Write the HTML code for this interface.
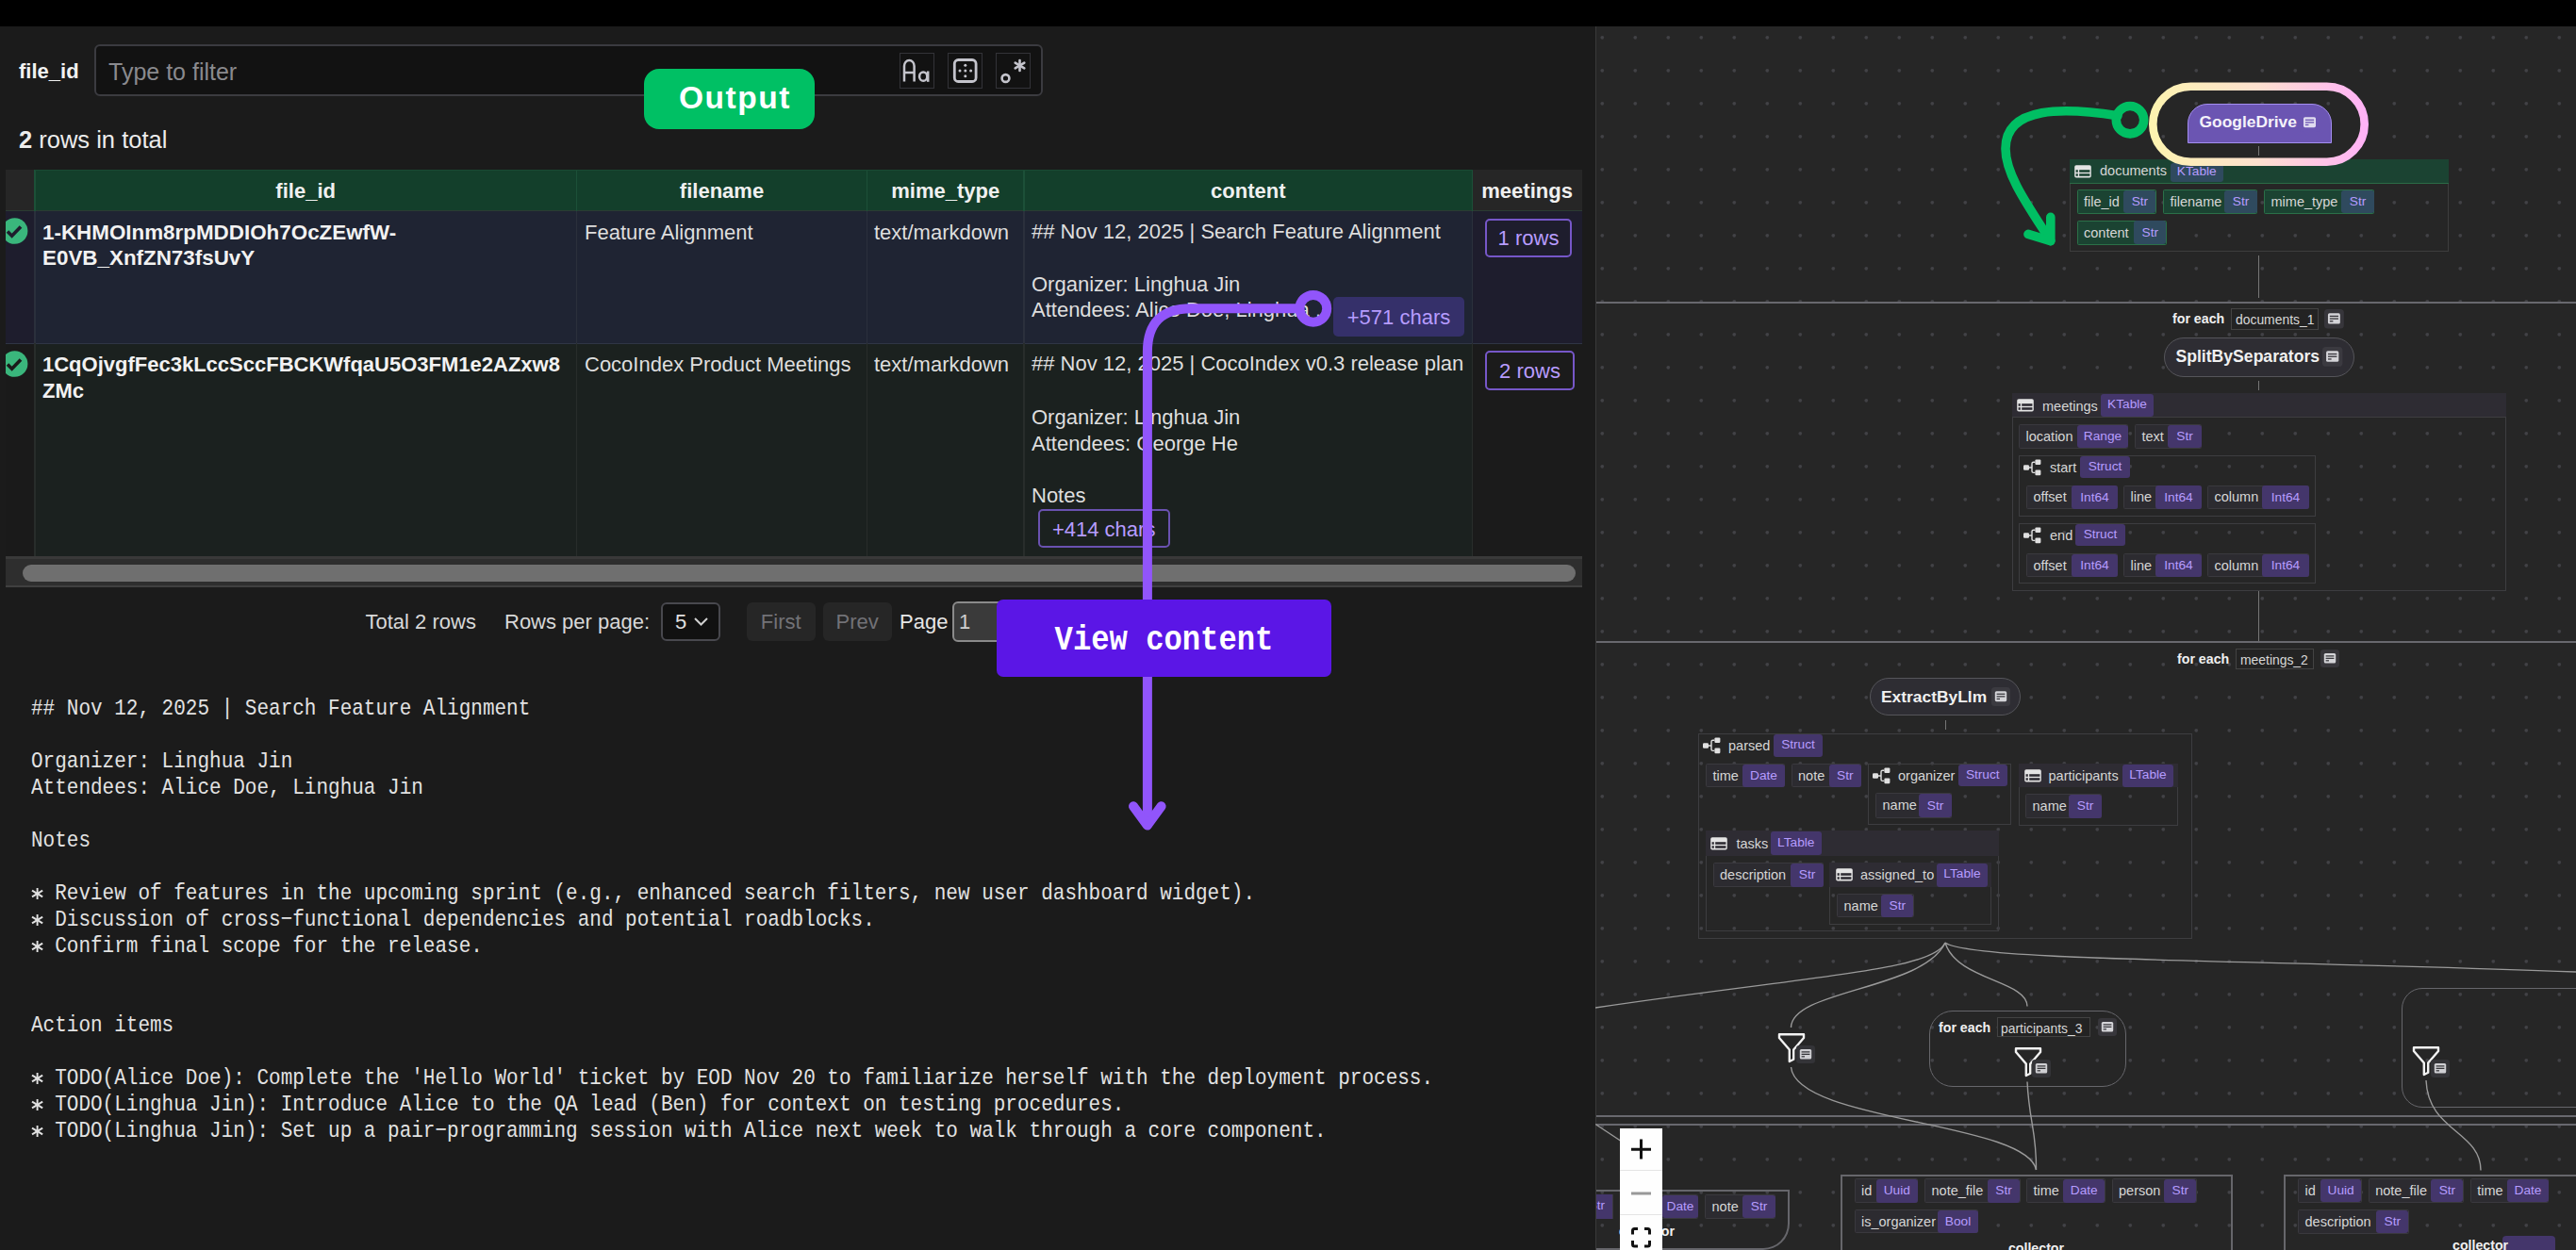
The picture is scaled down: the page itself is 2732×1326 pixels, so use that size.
<!DOCTYPE html><html><head><meta charset="utf-8"><style>
html,body{margin:0;padding:0}
body{width:2732px;height:1326px;overflow:hidden;position:relative;background:#1b1b1b;font-family:"Liberation Sans",sans-serif}
.a{position:absolute;box-sizing:border-box}
.t{white-space:pre}
</style></head><body>
<div class="a" style="left:0.00px;top:0.00px;width:2732.00px;height:28.00px;background:#000;"></div>
<div class="a t" style="left:20.00px;top:65.27px;font-size:22px;line-height:22px;color:#f2f2f2;font-family:'Liberation Sans', sans-serif;font-weight:bold;">file_id</div>
<div class="a" style="left:100.00px;top:47.00px;width:1006.00px;height:55.00px;background:#121212;border:2px solid #3b3b40;border-radius:6px;"></div>
<div class="a t" style="left:115.00px;top:63.73px;font-size:25px;line-height:25px;color:#8a8a8e;font-family:'Liberation Sans', sans-serif;">Type to filter</div>
<div class="a" style="left:954.00px;top:56.00px;width:37.00px;height:38.00px;border:1px solid #333338;"></div>
<div class="a" style="left:1005.00px;top:56.00px;width:37.00px;height:38.00px;border:1px solid #333338;"></div>
<div class="a" style="left:1055.60px;top:56.00px;width:37.00px;height:38.00px;border:1px solid #333338;"></div>
<svg class="a" style="left:954px;top:56px" width="37" height="38" viewBox="0 0 37 38">
<path d="M5 30.5 V14 A5.3 6 0 0 1 15.6 14 V30.5 M5 21 H15.6" fill="none" stroke="#c4c4cc" stroke-width="2.5"/>
<ellipse cx="25.2" cy="25.2" rx="4.1" ry="4.6" fill="none" stroke="#c4c4cc" stroke-width="2.5"/>
<path d="M30.2 19.5 V30.8" stroke="#c4c4cc" stroke-width="2.5"/>
</svg>
<svg class="a" style="left:1005px;top:56px" width="37" height="38" viewBox="0 0 37 38">
<rect x="7.3" y="7.5" width="22.8" height="23" rx="4" fill="none" stroke="#c4c4cc" stroke-width="2.8"/>
<circle cx="18.8" cy="19" r="1.5" fill="#c4c4cc"/><circle cx="18.8" cy="13.2" r="1.5" fill="#c4c4cc"/>
<circle cx="18.8" cy="24.8" r="1.5" fill="#c4c4cc"/><circle cx="13" cy="19" r="1.5" fill="#c4c4cc"/><circle cx="24.6" cy="19" r="1.5" fill="#c4c4cc"/>
</svg>
<svg class="a" style="left:1055.6px;top:56px" width="37" height="38" viewBox="0 0 37 38">
<circle cx="10.5" cy="27" r="3.9" fill="none" stroke="#c4c4cc" stroke-width="2.6"/>
<g stroke="#c4c4cc" stroke-width="2.6" stroke-linecap="round"><path d="M25.5 8 V19"/><path d="M20.7 10.7 L30.3 16.3"/><path d="M30.3 10.7 L20.7 16.3"/></g>
</svg>
<div class="a t" style="left:20.00px;top:136.31px;font-size:25.5px;line-height:25.5px;color:#ececec;font-family:'Liberation Sans', sans-serif;"><b>2</b> rows in total</div>
<div class="a" style="left:5.60px;top:180.00px;width:31.20px;height:43.60px;background:#262626;"></div>
<div class="a" style="left:36.80px;top:180.00px;width:1524.80px;height:43.60px;background:#133f2b;"></div>
<div class="a" style="left:1561.60px;top:180.00px;width:116.00px;height:43.60px;background:#262626;"></div>
<div class="a" style="left:5.60px;top:223.60px;width:31.20px;height:140.70px;background:#1e1d2d;"></div>
<div class="a" style="left:36.80px;top:223.60px;width:1524.80px;height:140.70px;background:#1f2433;"></div>
<div class="a" style="left:1561.60px;top:223.60px;width:116.00px;height:140.70px;background:#1e1d2d;"></div>
<div class="a" style="left:5.60px;top:364.30px;width:31.20px;height:225.30px;background:#1a1a1a;"></div>
<div class="a" style="left:36.80px;top:364.30px;width:1524.80px;height:225.30px;background:#1b211f;"></div>
<div class="a" style="left:1561.60px;top:364.30px;width:116.00px;height:225.30px;background:#1b1b1b;"></div>
<div class="a" style="left:5.60px;top:223.10px;width:1672.00px;height:1.00px;background:#2b3b33;"></div>
<div class="a" style="left:5.60px;top:363.80px;width:1672.00px;height:1.00px;background:#2f3545;"></div>
<div class="a" style="left:36.05px;top:180.00px;width:1.50px;height:43.60px;background:#1c5038;"></div>
<div class="a" style="left:36.05px;top:223.60px;width:1.50px;height:140.70px;background:#2b303c;"></div>
<div class="a" style="left:36.05px;top:364.30px;width:1.50px;height:225.30px;background:#282d2b;"></div>
<div class="a" style="left:610.75px;top:180.00px;width:1.50px;height:43.60px;background:#1c5038;"></div>
<div class="a" style="left:610.75px;top:223.60px;width:1.50px;height:140.70px;background:#2b303c;"></div>
<div class="a" style="left:610.75px;top:364.30px;width:1.50px;height:225.30px;background:#282d2b;"></div>
<div class="a" style="left:918.75px;top:180.00px;width:1.50px;height:43.60px;background:#1c5038;"></div>
<div class="a" style="left:918.75px;top:223.60px;width:1.50px;height:140.70px;background:#2b303c;"></div>
<div class="a" style="left:918.75px;top:364.30px;width:1.50px;height:225.30px;background:#282d2b;"></div>
<div class="a" style="left:1085.25px;top:180.00px;width:1.50px;height:43.60px;background:#1c5038;"></div>
<div class="a" style="left:1085.25px;top:223.60px;width:1.50px;height:140.70px;background:#2b303c;"></div>
<div class="a" style="left:1085.25px;top:364.30px;width:1.50px;height:225.30px;background:#282d2b;"></div>
<div class="a" style="left:1560.85px;top:180.00px;width:1.50px;height:43.60px;background:#1c5038;"></div>
<div class="a" style="left:1560.85px;top:223.60px;width:1.50px;height:140.70px;background:#2b303c;"></div>
<div class="a" style="left:1560.85px;top:364.30px;width:1.50px;height:225.30px;background:#282d2b;"></div>
<div class="a" style="left:36.80px;top:180.00px;width:1524.80px;height:1.00px;background:#1a4a33;"></div>
<div class="a" style="left:5.60px;top:589.60px;width:1672.00px;height:33.70px;background:#2e2e2e;"></div>
<div class="a" style="left:5.60px;top:589.60px;width:1672.00px;height:3.00px;background:#393939;"></div>
<div class="a" style="left:5.60px;top:621.00px;width:1672.00px;height:2.30px;background:#404040;"></div>
<div class="a" style="left:24.00px;top:599.00px;width:1647.00px;height:18.10px;background:#6f6f6f;border-radius:9px;"></div>
<div class="a t" style="left:-675.85px;width:2000px;text-align:center;top:191.77px;font-size:22px;line-height:22px;color:#f0f0f0;font-family:'Liberation Sans', sans-serif;font-weight:bold;">file_id</div>
<div class="a t" style="left:-234.50px;width:2000px;text-align:center;top:191.77px;font-size:22px;line-height:22px;color:#f0f0f0;font-family:'Liberation Sans', sans-serif;font-weight:bold;">filename</div>
<div class="a t" style="left:2.75px;width:2000px;text-align:center;top:191.77px;font-size:22px;line-height:22px;color:#f0f0f0;font-family:'Liberation Sans', sans-serif;font-weight:bold;">mime_type</div>
<div class="a t" style="left:323.80px;width:2000px;text-align:center;top:191.77px;font-size:22px;line-height:22px;color:#f0f0f0;font-family:'Liberation Sans', sans-serif;font-weight:bold;">content</div>
<div class="a t" style="left:619.60px;width:2000px;text-align:center;top:191.77px;font-size:22px;line-height:22px;color:#f0f0f0;font-family:'Liberation Sans', sans-serif;font-weight:bold;">meetings</div>
<svg class="a" style="left:5.6px;top:231.40px" width="25" height="28" viewBox="5.6 231.40 25 28">
<circle cx="15.2" cy="245.4" r="13.8" fill="#3ab67c"/>
<path d="M7.6 246.0 L12.2 250.6 L21.6 240.8" fill="none" stroke="#1e1d2d" stroke-width="3.6"/></svg>
<svg class="a" style="left:5.6px;top:371.60px" width="25" height="28" viewBox="5.6 371.60 25 28">
<circle cx="15.2" cy="385.6" r="13.8" fill="#3ab67c"/>
<path d="M7.6 386.20000000000005 L12.2 390.8 L21.6 381.0" fill="none" stroke="#1a1a1a" stroke-width="3.6"/></svg>
<div class="a t" style="left:45.00px;top:235.93px;font-size:22.4px;line-height:22.4px;color:#f2f2f2;font-family:'Liberation Sans', sans-serif;font-weight:bold;">1-KHMOInm8rpMDDIOh7OcZEwfW-</div>
<div class="a t" style="left:45.00px;top:262.93px;font-size:22.4px;line-height:22.4px;color:#f2f2f2;font-family:'Liberation Sans', sans-serif;font-weight:bold;">E0VB_XnfZN73fsUvY</div>
<div class="a t" style="left:620.00px;top:236.27px;font-size:22px;line-height:22px;color:#dedede;font-family:'Liberation Sans', sans-serif;">Feature Alignment</div>
<div class="a t" style="left:927.00px;top:236.27px;font-size:22px;line-height:22px;color:#dedede;font-family:'Liberation Sans', sans-serif;">text/markdown</div>
<div class="a t" style="left:1094.00px;top:235.27px;font-size:22px;line-height:22px;color:#dedede;font-family:'Liberation Sans', sans-serif;">## Nov 12, 2025 | Search Feature Alignment</div>
<div class="a t" style="left:1094.00px;top:291.27px;font-size:22px;line-height:22px;color:#dedede;font-family:'Liberation Sans', sans-serif;">Organizer: Linghua Jin</div>
<div class="a t" style="left:1094.00px;top:317.77px;font-size:22px;line-height:22px;color:#dedede;font-family:'Liberation Sans', sans-serif;">Attendees: Alice Doe, Linghua ..</div>
<div class="a" style="left:1414.00px;top:314.50px;width:139.00px;height:42.50px;background:#35306a;border-radius:5px;"></div>
<div class="a t" style="left:483.50px;width:2000px;text-align:center;top:326.07px;font-size:22px;line-height:22px;color:#b69cff;font-family:'Liberation Sans', sans-serif;">+571 chars</div>
<div class="a" style="left:1575.00px;top:232.00px;width:92.00px;height:40.50px;border:2px solid #7657c8;border-radius:5px;"></div>
<div class="a t" style="left:621.00px;width:2000px;text-align:center;top:241.77px;font-size:22px;line-height:22px;color:#b89cff;font-family:'Liberation Sans', sans-serif;">1 rows</div>
<div class="a t" style="left:45.00px;top:376.27px;font-size:22px;line-height:22px;color:#f2f2f2;font-family:'Liberation Sans', sans-serif;font-weight:bold;">1CqOjvgfFec3kLccSccFBCKWfqaU5O3FM1e2AZxw8</div>
<div class="a t" style="left:45.00px;top:404.27px;font-size:22px;line-height:22px;color:#f2f2f2;font-family:'Liberation Sans', sans-serif;font-weight:bold;">ZMc</div>
<div class="a t" style="left:620.00px;top:376.27px;font-size:22px;line-height:22px;color:#dedede;font-family:'Liberation Sans', sans-serif;">CocoIndex Product Meetings</div>
<div class="a t" style="left:927.00px;top:376.27px;font-size:22px;line-height:22px;color:#dedede;font-family:'Liberation Sans', sans-serif;">text/markdown</div>
<div class="a t" style="left:1094.00px;top:375.27px;font-size:22px;line-height:22px;color:#dedede;font-family:'Liberation Sans', sans-serif;">## Nov 12, 2025 | CocoIndex v0.3 release plan</div>
<div class="a t" style="left:1094.00px;top:432.27px;font-size:22px;line-height:22px;color:#dedede;font-family:'Liberation Sans', sans-serif;">Organizer: Linghua Jin</div>
<div class="a t" style="left:1094.00px;top:459.77px;font-size:22px;line-height:22px;color:#dedede;font-family:'Liberation Sans', sans-serif;">Attendees: George He</div>
<div class="a t" style="left:1094.00px;top:515.27px;font-size:22px;line-height:22px;color:#dedede;font-family:'Liberation Sans', sans-serif;">Notes</div>
<div class="a" style="left:1100.50px;top:540.00px;width:140.50px;height:41.00px;border:2px solid #6a52b0;border-radius:5px;"></div>
<div class="a t" style="left:170.70px;width:2000px;text-align:center;top:550.77px;font-size:22px;line-height:22px;color:#b69cff;font-family:'Liberation Sans', sans-serif;">+414 chars</div>
<div class="a" style="left:1575.00px;top:371.60px;width:95.00px;height:42.60px;border:2px solid #7657c8;border-radius:5px;"></div>
<div class="a t" style="left:622.50px;width:2000px;text-align:center;top:383.47px;font-size:22px;line-height:22px;color:#b89cff;font-family:'Liberation Sans', sans-serif;">2 rows</div>
<div class="a t" style="left:387.50px;top:649.27px;font-size:22px;line-height:22px;color:#d8d8d8;font-family:'Liberation Sans', sans-serif;">Total 2 rows</div>
<div class="a t" style="left:535.00px;top:649.27px;font-size:22px;line-height:22px;color:#d8d8d8;font-family:'Liberation Sans', sans-serif;">Rows per page:</div>
<div class="a" style="left:700.50px;top:639.00px;width:63.50px;height:41.00px;background:#111111;border:2px solid #48484e;border-radius:6px;"></div>
<div class="a t" style="left:716.00px;top:649.27px;font-size:22px;line-height:22px;color:#e0e0e0;font-family:'Liberation Sans', sans-serif;">5</div>
<svg class="a" style="left:735px;top:653px" width="18" height="12" viewBox="0 0 18 12"><path d="M2 3 L8.5 9.5 L15 3" fill="none" stroke="#d0d0d0" stroke-width="2"/></svg>
<div class="a" style="left:792.00px;top:639.00px;width:72.50px;height:41.00px;background:#262626;border-radius:6px;"></div>
<div class="a t" style="left:-171.80px;width:2000px;text-align:center;top:649.27px;font-size:22px;line-height:22px;color:#727277;font-family:'Liberation Sans', sans-serif;">First</div>
<div class="a" style="left:873.00px;top:639.00px;width:72.50px;height:41.00px;background:#262626;border-radius:6px;"></div>
<div class="a t" style="left:-90.80px;width:2000px;text-align:center;top:649.27px;font-size:22px;line-height:22px;color:#727277;font-family:'Liberation Sans', sans-serif;">Prev</div>
<div class="a t" style="left:954.00px;top:649.27px;font-size:22px;line-height:22px;color:#e6e6e6;font-family:'Liberation Sans', sans-serif;">Page</div>
<div class="a" style="left:1009.50px;top:638.00px;width:70.50px;height:43.00px;background:#3a3a3a;border:2px solid #8a8a8a;border-radius:6px;"></div>
<div class="a t" style="left:1017.00px;top:649.27px;font-size:22px;line-height:22px;color:#cfcfcf;font-family:'Liberation Sans', sans-serif;">1</div>
<div class="a t" style="left:33.00px;top:741.51px;font-size:21px;line-height:21px;color:#e2e2e2;font-family:'Liberation Mono', monospace;transform:scaleY(1.16);transform-origin:0 16.1px;">## Nov 12, 2025 | Search Feature Alignment</div>
<div class="a t" style="left:33.00px;top:797.57px;font-size:21px;line-height:21px;color:#e2e2e2;font-family:'Liberation Mono', monospace;transform:scaleY(1.16);transform-origin:0 16.1px;">Organizer: Linghua Jin</div>
<div class="a t" style="left:33.00px;top:825.60px;font-size:21px;line-height:21px;color:#e2e2e2;font-family:'Liberation Mono', monospace;transform:scaleY(1.16);transform-origin:0 16.1px;">Attendees: Alice Doe, Linghua Jin</div>
<div class="a t" style="left:33.00px;top:881.66px;font-size:21px;line-height:21px;color:#e2e2e2;font-family:'Liberation Mono', monospace;transform:scaleY(1.16);transform-origin:0 16.1px;">Notes</div>
<svg class="a" style="left:32px;top:940.01px" width="16" height="16" viewBox="-8 -8 16 16"><g stroke="#e2e2e2" stroke-width="1.9"><path d="M-0.4 -6 V6"/><path d="M-6 -3.4 L5.2 3.4"/><path d="M-6 3.4 L5.2 -3.4"/></g></svg>
<div class="a t" style="left:33.00px;top:937.72px;font-size:21px;line-height:21px;color:#e2e2e2;font-family:'Liberation Mono', monospace;transform:scaleY(1.16);transform-origin:0 16.1px;">  Review of features in the upcoming sprint (e.g., enhanced search filters, new user dashboard widget).</div>
<svg class="a" style="left:32px;top:968.04px" width="16" height="16" viewBox="-8 -8 16 16"><g stroke="#e2e2e2" stroke-width="1.9"><path d="M-0.4 -6 V6"/><path d="M-6 -3.4 L5.2 3.4"/><path d="M-6 3.4 L5.2 -3.4"/></g></svg>
<div class="a t" style="left:33.00px;top:965.75px;font-size:21px;line-height:21px;color:#e2e2e2;font-family:'Liberation Mono', monospace;transform:scaleY(1.16);transform-origin:0 16.1px;">  Discussion of cross−functional dependencies and potential roadblocks.</div>
<svg class="a" style="left:32px;top:996.07px" width="16" height="16" viewBox="-8 -8 16 16"><g stroke="#e2e2e2" stroke-width="1.9"><path d="M-0.4 -6 V6"/><path d="M-6 -3.4 L5.2 3.4"/><path d="M-6 3.4 L5.2 -3.4"/></g></svg>
<div class="a t" style="left:33.00px;top:993.78px;font-size:21px;line-height:21px;color:#e2e2e2;font-family:'Liberation Mono', monospace;transform:scaleY(1.16);transform-origin:0 16.1px;">  Confirm final scope for the release.</div>
<div class="a t" style="left:33.00px;top:1077.87px;font-size:21px;line-height:21px;color:#e2e2e2;font-family:'Liberation Mono', monospace;transform:scaleY(1.16);transform-origin:0 16.1px;">Action items</div>
<svg class="a" style="left:32px;top:1136.22px" width="16" height="16" viewBox="-8 -8 16 16"><g stroke="#e2e2e2" stroke-width="1.9"><path d="M-0.4 -6 V6"/><path d="M-6 -3.4 L5.2 3.4"/><path d="M-6 3.4 L5.2 -3.4"/></g></svg>
<div class="a t" style="left:33.00px;top:1133.93px;font-size:21px;line-height:21px;color:#e2e2e2;font-family:'Liberation Mono', monospace;transform:scaleY(1.16);transform-origin:0 16.1px;">  TODO(Alice Doe): Complete the &#39;Hello World&#39; ticket by EOD Nov 20 to familiarize herself with the deployment process.</div>
<svg class="a" style="left:32px;top:1164.25px" width="16" height="16" viewBox="-8 -8 16 16"><g stroke="#e2e2e2" stroke-width="1.9"><path d="M-0.4 -6 V6"/><path d="M-6 -3.4 L5.2 3.4"/><path d="M-6 3.4 L5.2 -3.4"/></g></svg>
<div class="a t" style="left:33.00px;top:1161.96px;font-size:21px;line-height:21px;color:#e2e2e2;font-family:'Liberation Mono', monospace;transform:scaleY(1.16);transform-origin:0 16.1px;">  TODO(Linghua Jin): Introduce Alice to the QA lead (Ben) for context on testing procedures.</div>
<svg class="a" style="left:32px;top:1192.28px" width="16" height="16" viewBox="-8 -8 16 16"><g stroke="#e2e2e2" stroke-width="1.9"><path d="M-0.4 -6 V6"/><path d="M-6 -3.4 L5.2 3.4"/><path d="M-6 3.4 L5.2 -3.4"/></g></svg>
<div class="a t" style="left:33.00px;top:1189.99px;font-size:21px;line-height:21px;color:#e2e2e2;font-family:'Liberation Mono', monospace;transform:scaleY(1.16);transform-origin:0 16.1px;">  TODO(Linghua Jin): Set up a pair−programming session with Alice next week to walk through a core component.</div>
<div class="a" style="left:1692px;top:28px;width:1040px;height:1298px;background-color:#262626;background-image:radial-gradient(circle at 7.3px 11.8px,#424246 1.1px,#37373a 1.7px,transparent 2.3px);background-size:35px 35px;background-position:0 0"></div>
<div class="a" style="left:1692.00px;top:28.00px;width:1.00px;height:1298.00px;background:#3a3a3a;"></div>
<div class="a" style="left:1693.00px;top:320.00px;width:1039.00px;height:2.00px;background:#68686e;"></div>
<div class="a" style="left:1693.00px;top:680.00px;width:1039.00px;height:2.00px;background:#68686e;"></div>
<div class="a" style="left:1693.00px;top:1182.80px;width:1039.00px;height:2.00px;background:#68686e;"></div>
<div class="a" style="left:1693.00px;top:1191.50px;width:1039.00px;height:2.00px;background:#68686e;"></div>
<div class="a" style="left:2395.00px;top:154.50px;width:1.00px;height:10.50px;background:#767676;"></div>
<div class="a" style="left:2395.00px;top:271.00px;width:1.00px;height:45.00px;background:#767676;"></div>
<div class="a" style="left:2320px;top:109.5px;width:152.5px;height:42px;background:#6b55b2;border-radius:21px 21px 0 0;border:1.5px solid #a48ef0"></div>
<div class="a t" style="left:2332.50px;top:121.27px;font-size:17.4px;line-height:17.4px;color:#f4f2fa;font-family:'Liberation Sans', sans-serif;font-weight:bold;">GoogleDrive</div>
<svg class="a" style="left:2439.00px;top:120.00px" width="21.00" height="20.00" viewBox="0 0 20 20" preserveAspectRatio="none"><rect x="0" y="0" width="20" height="20" rx="3.5" fill="#6b55b2"/><rect x="3.8" y="4.2" width="12.4" height="11" rx="1.6" fill="#e0dcf0"/><rect x="5.6" y="6.6" width="8.8" height="1.3" fill="#6b55b2"/><rect x="5.6" y="9.2" width="8.8" height="1.3" fill="#6b55b2"/><rect x="5.6" y="11.8" width="3.4" height="1.3" fill="#6b55b2"/></svg>
<div class="a" style="left:2195.25px;top:169.00px;width:401.75px;height:98.10px;border:1px solid #3d3d3d;"></div>
<div class="a" style="left:2195.25px;top:169.00px;width:401.75px;height:25.40px;background:#1b4332;"></div>
<div class="a" style="left:2195.25px;top:193.90px;width:401.75px;height:1.00px;background:#2b6a46;"></div>
<svg class="a" style="left:2200.40px;top:175.00px" width="18" height="14" viewBox="0 0 18 14"><rect x="0.2" y="0.2" width="17.6" height="13.4" rx="1.8" fill="#e4e4e4"/><rect x="1.6" y="5.2" width="2.2" height="2.6" fill="#1b4332"/><rect x="5.2" y="5.2" width="11.2" height="2.6" fill="#1b4332"/><rect x="1.6" y="9.2" width="2.2" height="2.6" fill="#1b4332"/><rect x="5.2" y="9.2" width="11.2" height="2.6" fill="#1b4332"/></svg>
<div class="a t" style="left:2227.00px;top:173.92px;font-size:14.5px;line-height:14.5px;color:#d6d6d6;font-family:'Liberation Sans', sans-serif;">documents</div>
<div class="a" style="left:2302.00px;top:172.50px;width:55.50px;height:20.00px;background:#2f4a5e;border-radius:3px;"></div>
<div class="a t" style="left:1329.75px;width:2000px;text-align:center;top:174.90px;font-size:13.7px;line-height:13.7px;color:#b69cff;font-family:'Liberation Sans', sans-serif;">KTable</div>
<div class="a" style="left:2202.50px;top:201.20px;width:84.50px;height:25.60px;background:#1b4332;border:1px solid #2b7048;border-radius:1.5px;"></div>
<div class="a" style="left:2251.80px;top:201.70px;width:34.70px;height:24.60px;background:#2f4a5e;border-radius:3px;"></div>
<div class="a t" style="left:2210.00px;top:207.02px;font-size:14.5px;line-height:14.5px;color:#d6d6d6;font-family:'Liberation Sans', sans-serif;">file_id</div>
<div class="a t" style="left:1269.40px;width:2000px;text-align:center;top:207.30px;font-size:13.7px;line-height:13.7px;color:#b69cff;font-family:'Liberation Sans', sans-serif;">Str</div>
<div class="a" style="left:2294.00px;top:201.20px;width:100.00px;height:25.60px;background:#1b4332;border:1px solid #2b7048;border-radius:1.5px;"></div>
<div class="a" style="left:2359.00px;top:201.70px;width:34.50px;height:24.60px;background:#2f4a5e;border-radius:3px;"></div>
<div class="a t" style="left:2301.50px;top:207.02px;font-size:14.5px;line-height:14.5px;color:#d6d6d6;font-family:'Liberation Sans', sans-serif;">filename</div>
<div class="a t" style="left:1376.50px;width:2000px;text-align:center;top:207.30px;font-size:13.7px;line-height:13.7px;color:#b69cff;font-family:'Liberation Sans', sans-serif;">Str</div>
<div class="a" style="left:2401.00px;top:201.20px;width:117.00px;height:25.60px;background:#1b4332;border:1px solid #2b7048;border-radius:1.5px;"></div>
<div class="a" style="left:2483.00px;top:201.70px;width:34.50px;height:24.60px;background:#2f4a5e;border-radius:3px;"></div>
<div class="a t" style="left:2408.50px;top:207.02px;font-size:14.5px;line-height:14.5px;color:#d6d6d6;font-family:'Liberation Sans', sans-serif;">mime_type</div>
<div class="a t" style="left:1500.50px;width:2000px;text-align:center;top:207.30px;font-size:13.7px;line-height:13.7px;color:#b69cff;font-family:'Liberation Sans', sans-serif;">Str</div>
<div class="a" style="left:2202.50px;top:233.70px;width:95.00px;height:26.30px;background:#1b4332;border:1px solid #2b7048;border-radius:1.5px;"></div>
<div class="a" style="left:2263.00px;top:234.20px;width:34.00px;height:25.30px;background:#2f4a5e;border-radius:3px;"></div>
<div class="a t" style="left:2210.00px;top:239.87px;font-size:14.5px;line-height:14.5px;color:#d6d6d6;font-family:'Liberation Sans', sans-serif;">content</div>
<div class="a t" style="left:1280.25px;width:2000px;text-align:center;top:240.15px;font-size:13.7px;line-height:13.7px;color:#b69cff;font-family:'Liberation Sans', sans-serif;">Str</div>
<div class="a t" style="left:2304.00px;top:330.98px;font-size:14.2px;line-height:14.2px;color:#f0f0f0;font-family:'Liberation Sans', sans-serif;font-weight:bold;">for each</div>
<div class="a" style="left:2366.00px;top:327.00px;width:93.00px;height:22.50px;background:#232323;border:1px solid #434343;"></div>
<div class="a t" style="left:2371.00px;top:332.53px;font-size:13.9px;line-height:13.9px;color:#d8d8d8;font-family:'Liberation Sans', sans-serif;">documents_1</div>
<svg class="a" style="left:2465.20px;top:328.00px" width="20.80" height="20.50" viewBox="0 0 20 20" preserveAspectRatio="none"><rect x="0" y="0" width="20" height="20" rx="3.5" fill="#37363b"/><rect x="3.8" y="4.2" width="12.4" height="11" rx="1.6" fill="#d4d4d8"/><rect x="5.6" y="6.6" width="8.8" height="1.3" fill="#37363b"/><rect x="5.6" y="9.2" width="8.8" height="1.3" fill="#37363b"/><rect x="5.6" y="11.8" width="3.4" height="1.3" fill="#37363b"/></svg>
<div class="a" style="left:2295.00px;top:358.00px;width:201.50px;height:41.50px;background:#2e2d33;border:1.5px solid #55555a;border-radius:21px;"></div>
<div class="a t" style="left:2307.50px;top:370.10px;font-size:17.6px;line-height:17.6px;color:#f0f0f0;font-family:'Liberation Sans', sans-serif;font-weight:bold;">SplitBySeparators</div>
<svg class="a" style="left:2463.30px;top:368.00px" width="21.40" height="20.80" viewBox="0 0 20 20" preserveAspectRatio="none"><rect x="0" y="0" width="20" height="20" rx="3.5" fill="#3b3a40"/><rect x="3.8" y="4.2" width="12.4" height="11" rx="1.6" fill="#d4d4d8"/><rect x="5.6" y="6.6" width="8.8" height="1.3" fill="#3b3a40"/><rect x="5.6" y="9.2" width="8.8" height="1.3" fill="#3b3a40"/><rect x="5.6" y="11.8" width="3.4" height="1.3" fill="#3b3a40"/></svg>
<div class="a" style="left:2395.00px;top:404.00px;width:1.00px;height:10.00px;background:#767676;"></div>
<div class="a" style="left:2133.75px;top:417.00px;width:523.75px;height:210.00px;border:1px solid #3d3d40;"></div>
<div class="a" style="left:2133.75px;top:417.00px;width:523.75px;height:25.50px;background:#2e2c33;"></div>
<div class="a" style="left:2133.75px;top:442.00px;width:523.75px;height:1.00px;background:#3d3d40;"></div>
<svg class="a" style="left:2139.00px;top:423.00px" width="18" height="14" viewBox="0 0 18 14"><rect x="0.2" y="0.2" width="17.6" height="13.4" rx="1.8" fill="#e4e4e4"/><rect x="1.6" y="5.2" width="2.2" height="2.6" fill="#2e2c33"/><rect x="5.2" y="5.2" width="11.2" height="2.6" fill="#2e2c33"/><rect x="1.6" y="9.2" width="2.2" height="2.6" fill="#2e2c33"/><rect x="5.2" y="9.2" width="11.2" height="2.6" fill="#2e2c33"/></svg>
<div class="a t" style="left:2166.00px;top:423.72px;font-size:14.5px;line-height:14.5px;color:#d6d6d6;font-family:'Liberation Sans', sans-serif;">meetings</div>
<div class="a" style="left:2228.00px;top:418.00px;width:56.00px;height:24.00px;background:#44366b;border-radius:3px;"></div>
<div class="a t" style="left:1256.00px;width:2000px;text-align:center;top:422.40px;font-size:13.7px;line-height:13.7px;color:#b69cff;font-family:'Liberation Sans', sans-serif;">KTable</div>
<div class="a" style="left:2141.00px;top:450.00px;width:116.00px;height:25.50px;background:#2c2b30;border:1px solid #3a393e;border-radius:1.5px;"></div>
<div class="a" style="left:2203.00px;top:450.50px;width:53.50px;height:24.50px;background:#44366b;border-radius:3px;"></div>
<div class="a t" style="left:2148.50px;top:455.77px;font-size:14.5px;line-height:14.5px;color:#d6d6d6;font-family:'Liberation Sans', sans-serif;">location</div>
<div class="a t" style="left:1230.00px;width:2000px;text-align:center;top:456.05px;font-size:13.7px;line-height:13.7px;color:#b69cff;font-family:'Liberation Sans', sans-serif;">Range</div>
<div class="a" style="left:2264.00px;top:450.00px;width:71.00px;height:25.50px;background:#2c2b30;border:1px solid #3a393e;border-radius:1.5px;"></div>
<div class="a" style="left:2299.00px;top:450.50px;width:35.50px;height:24.50px;background:#44366b;border-radius:3px;"></div>
<div class="a t" style="left:2271.50px;top:455.77px;font-size:14.5px;line-height:14.5px;color:#d6d6d6;font-family:'Liberation Sans', sans-serif;">text</div>
<div class="a t" style="left:1317.00px;width:2000px;text-align:center;top:456.05px;font-size:13.7px;line-height:13.7px;color:#b69cff;font-family:'Liberation Sans', sans-serif;">Str</div>
<div class="a" style="left:2141.00px;top:482.50px;width:315.00px;height:65.00px;border:1px solid #3d3d40;"></div>
<svg class="a" style="left:2145.50px;top:486.50px" width="20" height="18" viewBox="0 0 20 18"><rect x="0" y="6.2" width="6" height="5.6" rx="1.2" fill="#e0e0e0"/><rect x="12.4" y="0.4" width="6" height="5.6" rx="1.2" fill="#e0e0e0"/><rect x="12.4" y="11.6" width="6" height="5.6" rx="1.2" fill="#e0e0e0"/><path d="M6 9 H9 M12.4 3.2 H10.6 Q9 3.2 9 4.8 V13 Q9 14.4 10.6 14.4 H12.4" fill="none" stroke="#e0e0e0" stroke-width="1.4"/></svg>
<div class="a t" style="left:2174.00px;top:488.72px;font-size:14.5px;line-height:14.5px;color:#d6d6d6;font-family:'Liberation Sans', sans-serif;">start</div>
<div class="a" style="left:2206.00px;top:484.00px;width:53.00px;height:23.00px;background:#44366b;border-radius:3px;"></div>
<div class="a t" style="left:1232.50px;width:2000px;text-align:center;top:487.90px;font-size:13.7px;line-height:13.7px;color:#b69cff;font-family:'Liberation Sans', sans-serif;">Struct</div>
<div class="a" style="left:2149.00px;top:514.50px;width:97.00px;height:25.50px;background:#2c2b30;border:1px solid #3a393e;border-radius:1.5px;"></div>
<div class="a" style="left:2197.00px;top:515.00px;width:48.50px;height:24.50px;background:#44366b;border-radius:3px;"></div>
<div class="a t" style="left:2156.50px;top:520.27px;font-size:14.5px;line-height:14.5px;color:#d6d6d6;font-family:'Liberation Sans', sans-serif;">offset</div>
<div class="a t" style="left:1221.50px;width:2000px;text-align:center;top:520.55px;font-size:13.7px;line-height:13.7px;color:#b69cff;font-family:'Liberation Sans', sans-serif;">Int64</div>
<div class="a" style="left:2252.00px;top:514.50px;width:83.00px;height:25.50px;background:#2c2b30;border:1px solid #3a393e;border-radius:1.5px;"></div>
<div class="a" style="left:2286.00px;top:515.00px;width:48.50px;height:24.50px;background:#44366b;border-radius:3px;"></div>
<div class="a t" style="left:2259.50px;top:520.27px;font-size:14.5px;line-height:14.5px;color:#d6d6d6;font-family:'Liberation Sans', sans-serif;">line</div>
<div class="a t" style="left:1310.50px;width:2000px;text-align:center;top:520.55px;font-size:13.7px;line-height:13.7px;color:#b69cff;font-family:'Liberation Sans', sans-serif;">Int64</div>
<div class="a" style="left:2341.00px;top:514.50px;width:108.00px;height:25.50px;background:#2c2b30;border:1px solid #3a393e;border-radius:1.5px;"></div>
<div class="a" style="left:2399.00px;top:515.00px;width:49.50px;height:24.50px;background:#44366b;border-radius:3px;"></div>
<div class="a t" style="left:2348.50px;top:520.27px;font-size:14.5px;line-height:14.5px;color:#d6d6d6;font-family:'Liberation Sans', sans-serif;">column</div>
<div class="a t" style="left:1424.00px;width:2000px;text-align:center;top:520.55px;font-size:13.7px;line-height:13.7px;color:#b69cff;font-family:'Liberation Sans', sans-serif;">Int64</div>
<div class="a" style="left:2141.00px;top:554.50px;width:315.00px;height:64.50px;border:1px solid #3d3d40;"></div>
<svg class="a" style="left:2145.50px;top:558.50px" width="20" height="18" viewBox="0 0 20 18"><rect x="0" y="6.2" width="6" height="5.6" rx="1.2" fill="#e0e0e0"/><rect x="12.4" y="0.4" width="6" height="5.6" rx="1.2" fill="#e0e0e0"/><rect x="12.4" y="11.6" width="6" height="5.6" rx="1.2" fill="#e0e0e0"/><path d="M6 9 H9 M12.4 3.2 H10.6 Q9 3.2 9 4.8 V13 Q9 14.4 10.6 14.4 H12.4" fill="none" stroke="#e0e0e0" stroke-width="1.4"/></svg>
<div class="a t" style="left:2174.00px;top:560.72px;font-size:14.5px;line-height:14.5px;color:#d6d6d6;font-family:'Liberation Sans', sans-serif;">end</div>
<div class="a" style="left:2201.00px;top:556.00px;width:53.00px;height:23.00px;background:#44366b;border-radius:3px;"></div>
<div class="a t" style="left:1227.50px;width:2000px;text-align:center;top:559.90px;font-size:13.7px;line-height:13.7px;color:#b69cff;font-family:'Liberation Sans', sans-serif;">Struct</div>
<div class="a" style="left:2149.00px;top:587.00px;width:97.00px;height:25.00px;background:#2c2b30;border:1px solid #3a393e;border-radius:1.5px;"></div>
<div class="a" style="left:2197.00px;top:587.50px;width:48.50px;height:24.00px;background:#44366b;border-radius:3px;"></div>
<div class="a t" style="left:2156.50px;top:592.52px;font-size:14.5px;line-height:14.5px;color:#d6d6d6;font-family:'Liberation Sans', sans-serif;">offset</div>
<div class="a t" style="left:1221.50px;width:2000px;text-align:center;top:592.80px;font-size:13.7px;line-height:13.7px;color:#b69cff;font-family:'Liberation Sans', sans-serif;">Int64</div>
<div class="a" style="left:2252.00px;top:587.00px;width:83.00px;height:25.00px;background:#2c2b30;border:1px solid #3a393e;border-radius:1.5px;"></div>
<div class="a" style="left:2286.00px;top:587.50px;width:48.50px;height:24.00px;background:#44366b;border-radius:3px;"></div>
<div class="a t" style="left:2259.50px;top:592.52px;font-size:14.5px;line-height:14.5px;color:#d6d6d6;font-family:'Liberation Sans', sans-serif;">line</div>
<div class="a t" style="left:1310.50px;width:2000px;text-align:center;top:592.80px;font-size:13.7px;line-height:13.7px;color:#b69cff;font-family:'Liberation Sans', sans-serif;">Int64</div>
<div class="a" style="left:2341.00px;top:587.00px;width:108.00px;height:25.00px;background:#2c2b30;border:1px solid #3a393e;border-radius:1.5px;"></div>
<div class="a" style="left:2399.00px;top:587.50px;width:49.50px;height:24.00px;background:#44366b;border-radius:3px;"></div>
<div class="a t" style="left:2348.50px;top:592.52px;font-size:14.5px;line-height:14.5px;color:#d6d6d6;font-family:'Liberation Sans', sans-serif;">column</div>
<div class="a t" style="left:1424.00px;width:2000px;text-align:center;top:592.80px;font-size:13.7px;line-height:13.7px;color:#b69cff;font-family:'Liberation Sans', sans-serif;">Int64</div>
<div class="a" style="left:2395.00px;top:627.00px;width:1.00px;height:53.00px;background:#767676;"></div>
<div class="a t" style="left:2309.00px;top:692.48px;font-size:14.2px;line-height:14.2px;color:#f0f0f0;font-family:'Liberation Sans', sans-serif;font-weight:bold;">for each</div>
<div class="a" style="left:2371.00px;top:687.50px;width:83.00px;height:22.00px;background:#232323;border:1px solid #434343;"></div>
<div class="a t" style="left:2376.00px;top:693.53px;font-size:13.9px;line-height:13.9px;color:#d8d8d8;font-family:'Liberation Sans', sans-serif;">meetings_2</div>
<svg class="a" style="left:2461.00px;top:689.00px" width="20.00" height="19.00" viewBox="0 0 20 20" preserveAspectRatio="none"><rect x="0" y="0" width="20" height="20" rx="3.5" fill="#37363b"/><rect x="3.8" y="4.2" width="12.4" height="11" rx="1.6" fill="#d4d4d8"/><rect x="5.6" y="6.6" width="8.8" height="1.3" fill="#37363b"/><rect x="5.6" y="9.2" width="8.8" height="1.3" fill="#37363b"/><rect x="5.6" y="11.8" width="3.4" height="1.3" fill="#37363b"/></svg>
<div class="a" style="left:1982.50px;top:719.00px;width:160.50px;height:40.00px;background:#2e2d33;border:1.5px solid #55555a;border-radius:20px;"></div>
<div class="a t" style="left:1995.00px;top:730.77px;font-size:17.4px;line-height:17.4px;color:#f0f0f0;font-family:'Liberation Sans', sans-serif;font-weight:bold;">ExtractByLlm</div>
<svg class="a" style="left:2111.50px;top:729.00px" width="20.00" height="20.00" viewBox="0 0 20 20" preserveAspectRatio="none"><rect x="0" y="0" width="20" height="20" rx="3.5" fill="#3b3a40"/><rect x="3.8" y="4.2" width="12.4" height="11" rx="1.6" fill="#d4d4d8"/><rect x="5.6" y="6.6" width="8.8" height="1.3" fill="#3b3a40"/><rect x="5.6" y="9.2" width="8.8" height="1.3" fill="#3b3a40"/><rect x="5.6" y="11.8" width="3.4" height="1.3" fill="#3b3a40"/></svg>
<div class="a" style="left:2062.50px;top:764.00px;width:1.00px;height:10.00px;background:#767676;"></div>
<div class="a" style="left:1801.00px;top:778.00px;width:523.50px;height:217.75px;border:1px solid #3d3d40;"></div>
<svg class="a" style="left:1806.00px;top:782.00px" width="20" height="18" viewBox="0 0 20 18"><rect x="0" y="6.2" width="6" height="5.6" rx="1.2" fill="#e0e0e0"/><rect x="12.4" y="0.4" width="6" height="5.6" rx="1.2" fill="#e0e0e0"/><rect x="12.4" y="11.6" width="6" height="5.6" rx="1.2" fill="#e0e0e0"/><path d="M6 9 H9 M12.4 3.2 H10.6 Q9 3.2 9 4.8 V13 Q9 14.4 10.6 14.4 H12.4" fill="none" stroke="#e0e0e0" stroke-width="1.4"/></svg>
<div class="a t" style="left:1833.00px;top:784.22px;font-size:14.5px;line-height:14.5px;color:#d6d6d6;font-family:'Liberation Sans', sans-serif;">parsed</div>
<div class="a" style="left:1881.00px;top:779.00px;width:52.00px;height:23.50px;background:#44366b;border-radius:3px;"></div>
<div class="a t" style="left:907.00px;width:2000px;text-align:center;top:783.15px;font-size:13.7px;line-height:13.7px;color:#b69cff;font-family:'Liberation Sans', sans-serif;">Struct</div>
<div class="a" style="left:1809.00px;top:810.00px;width:84.00px;height:25.00px;background:#2c2b30;border:1px solid #3a393e;border-radius:1.5px;"></div>
<div class="a" style="left:1848.00px;top:810.50px;width:44.50px;height:24.00px;background:#44366b;border-radius:3px;"></div>
<div class="a t" style="left:1816.50px;top:815.52px;font-size:14.5px;line-height:14.5px;color:#d6d6d6;font-family:'Liberation Sans', sans-serif;">time</div>
<div class="a t" style="left:870.50px;width:2000px;text-align:center;top:815.80px;font-size:13.7px;line-height:13.7px;color:#b69cff;font-family:'Liberation Sans', sans-serif;">Date</div>
<div class="a" style="left:1899.50px;top:810.00px;width:74.50px;height:25.00px;background:#2c2b30;border:1px solid #3a393e;border-radius:1.5px;"></div>
<div class="a" style="left:1939.50px;top:810.50px;width:34.00px;height:24.00px;background:#44366b;border-radius:3px;"></div>
<div class="a t" style="left:1907.00px;top:815.52px;font-size:14.5px;line-height:14.5px;color:#d6d6d6;font-family:'Liberation Sans', sans-serif;">note</div>
<div class="a t" style="left:956.75px;width:2000px;text-align:center;top:815.80px;font-size:13.7px;line-height:13.7px;color:#b69cff;font-family:'Liberation Sans', sans-serif;">Str</div>
<div class="a" style="left:1981.00px;top:810.00px;width:152.00px;height:65.00px;border:1px solid #3d3d40;"></div>
<svg class="a" style="left:1986.00px;top:813.50px" width="20" height="18" viewBox="0 0 20 18"><rect x="0" y="6.2" width="6" height="5.6" rx="1.2" fill="#e0e0e0"/><rect x="12.4" y="0.4" width="6" height="5.6" rx="1.2" fill="#e0e0e0"/><rect x="12.4" y="11.6" width="6" height="5.6" rx="1.2" fill="#e0e0e0"/><path d="M6 9 H9 M12.4 3.2 H10.6 Q9 3.2 9 4.8 V13 Q9 14.4 10.6 14.4 H12.4" fill="none" stroke="#e0e0e0" stroke-width="1.4"/></svg>
<div class="a t" style="left:2013.00px;top:815.72px;font-size:14.5px;line-height:14.5px;color:#d6d6d6;font-family:'Liberation Sans', sans-serif;">organizer</div>
<div class="a" style="left:2076.50px;top:810.50px;width:52.50px;height:23.50px;background:#44366b;border-radius:3px;"></div>
<div class="a t" style="left:1102.75px;width:2000px;text-align:center;top:814.65px;font-size:13.7px;line-height:13.7px;color:#b69cff;font-family:'Liberation Sans', sans-serif;">Struct</div>
<div class="a" style="left:1989.00px;top:841.00px;width:81.00px;height:26.50px;background:#2c2b30;border:1px solid #3a393e;border-radius:1.5px;"></div>
<div class="a" style="left:2035.00px;top:841.50px;width:34.50px;height:25.50px;background:#44366b;border-radius:3px;"></div>
<div class="a t" style="left:1996.50px;top:847.27px;font-size:14.5px;line-height:14.5px;color:#d6d6d6;font-family:'Liberation Sans', sans-serif;">name</div>
<div class="a t" style="left:1052.50px;width:2000px;text-align:center;top:847.55px;font-size:13.7px;line-height:13.7px;color:#b69cff;font-family:'Liberation Sans', sans-serif;">Str</div>
<div class="a" style="left:2141.00px;top:810.00px;width:168.50px;height:65.50px;border:1px solid #3d3d40;"></div>
<div class="a" style="left:2141.00px;top:810.00px;width:168.50px;height:25.00px;background:#2e2c33;"></div>
<svg class="a" style="left:2146.50px;top:816.00px" width="18" height="14" viewBox="0 0 18 14"><rect x="0.2" y="0.2" width="17.6" height="13.4" rx="1.8" fill="#e4e4e4"/><rect x="1.6" y="5.2" width="2.2" height="2.6" fill="#2e2c33"/><rect x="5.2" y="5.2" width="11.2" height="2.6" fill="#2e2c33"/><rect x="1.6" y="9.2" width="2.2" height="2.6" fill="#2e2c33"/><rect x="5.2" y="9.2" width="11.2" height="2.6" fill="#2e2c33"/></svg>
<div class="a t" style="left:2172.50px;top:815.72px;font-size:14.5px;line-height:14.5px;color:#d6d6d6;font-family:'Liberation Sans', sans-serif;">participants</div>
<div class="a" style="left:2251.00px;top:810.50px;width:54.00px;height:24.00px;background:#44366b;border-radius:3px;"></div>
<div class="a t" style="left:1278.00px;width:2000px;text-align:center;top:814.90px;font-size:13.7px;line-height:13.7px;color:#b69cff;font-family:'Liberation Sans', sans-serif;">LTable</div>
<div class="a" style="left:2148.00px;top:842.00px;width:81.00px;height:26.00px;background:#2c2b30;border:1px solid #3a393e;border-radius:1.5px;"></div>
<div class="a" style="left:2194.00px;top:842.50px;width:34.50px;height:25.00px;background:#44366b;border-radius:3px;"></div>
<div class="a t" style="left:2155.50px;top:848.02px;font-size:14.5px;line-height:14.5px;color:#d6d6d6;font-family:'Liberation Sans', sans-serif;">name</div>
<div class="a t" style="left:1211.50px;width:2000px;text-align:center;top:848.30px;font-size:13.7px;line-height:13.7px;color:#b69cff;font-family:'Liberation Sans', sans-serif;">Str</div>
<div class="a" style="left:1809.00px;top:881.00px;width:310.50px;height:107.00px;border:1px solid #3d3d40;"></div>
<div class="a" style="left:1809.00px;top:881.00px;width:310.50px;height:26.50px;background:#2e2c33;"></div>
<svg class="a" style="left:1814.00px;top:888.00px" width="18" height="14" viewBox="0 0 18 14"><rect x="0.2" y="0.2" width="17.6" height="13.4" rx="1.8" fill="#e4e4e4"/><rect x="1.6" y="5.2" width="2.2" height="2.6" fill="#2e2c33"/><rect x="5.2" y="5.2" width="11.2" height="2.6" fill="#2e2c33"/><rect x="1.6" y="9.2" width="2.2" height="2.6" fill="#2e2c33"/><rect x="5.2" y="9.2" width="11.2" height="2.6" fill="#2e2c33"/></svg>
<div class="a t" style="left:1841.50px;top:887.72px;font-size:14.5px;line-height:14.5px;color:#d6d6d6;font-family:'Liberation Sans', sans-serif;">tasks</div>
<div class="a" style="left:1878.00px;top:882.00px;width:53.50px;height:25.00px;background:#44366b;border-radius:3px;"></div>
<div class="a t" style="left:904.75px;width:2000px;text-align:center;top:886.90px;font-size:13.7px;line-height:13.7px;color:#b69cff;font-family:'Liberation Sans', sans-serif;">LTable</div>
<div class="a" style="left:1816.50px;top:915.00px;width:117.50px;height:26.00px;background:#2c2b30;border:1px solid #3a393e;border-radius:1.5px;"></div>
<div class="a" style="left:1899.00px;top:915.50px;width:34.50px;height:25.00px;background:#44366b;border-radius:3px;"></div>
<div class="a t" style="left:1824.00px;top:921.02px;font-size:14.5px;line-height:14.5px;color:#d6d6d6;font-family:'Liberation Sans', sans-serif;">description</div>
<div class="a t" style="left:916.50px;width:2000px;text-align:center;top:921.30px;font-size:13.7px;line-height:13.7px;color:#b69cff;font-family:'Liberation Sans', sans-serif;">Str</div>
<div class="a" style="left:1940.00px;top:915.00px;width:172.00px;height:65.50px;border:1px solid #3d3d40;"></div>
<div class="a" style="left:1940.00px;top:915.00px;width:172.00px;height:26.00px;background:#2e2c33;"></div>
<svg class="a" style="left:1946.50px;top:921.00px" width="18" height="14" viewBox="0 0 18 14"><rect x="0.2" y="0.2" width="17.6" height="13.4" rx="1.8" fill="#e4e4e4"/><rect x="1.6" y="5.2" width="2.2" height="2.6" fill="#2e2c33"/><rect x="5.2" y="5.2" width="11.2" height="2.6" fill="#2e2c33"/><rect x="1.6" y="9.2" width="2.2" height="2.6" fill="#2e2c33"/><rect x="5.2" y="9.2" width="11.2" height="2.6" fill="#2e2c33"/></svg>
<div class="a t" style="left:1973.00px;top:921.22px;font-size:14.5px;line-height:14.5px;color:#d6d6d6;font-family:'Liberation Sans', sans-serif;">assigned_to</div>
<div class="a" style="left:2054.00px;top:915.50px;width:54.00px;height:25.00px;background:#44366b;border-radius:3px;"></div>
<div class="a t" style="left:1081.00px;width:2000px;text-align:center;top:920.40px;font-size:13.7px;line-height:13.7px;color:#b69cff;font-family:'Liberation Sans', sans-serif;">LTable</div>
<div class="a" style="left:1948.00px;top:948.00px;width:81.50px;height:25.00px;background:#2c2b30;border:1px solid #3a393e;border-radius:1.5px;"></div>
<div class="a" style="left:1995.00px;top:948.50px;width:34.00px;height:24.00px;background:#44366b;border-radius:3px;"></div>
<div class="a t" style="left:1955.50px;top:953.52px;font-size:14.5px;line-height:14.5px;color:#d6d6d6;font-family:'Liberation Sans', sans-serif;">name</div>
<div class="a t" style="left:1012.25px;width:2000px;text-align:center;top:953.80px;font-size:13.7px;line-height:13.7px;color:#b69cff;font-family:'Liberation Sans', sans-serif;">Str</div>
<div class="a" style="left:2045.75px;top:1072.00px;width:208.75px;height:80.50px;border:1.5px solid #66666b;border-radius:25px;"></div>
<div class="a t" style="left:2056.00px;top:1082.98px;font-size:14.2px;line-height:14.2px;color:#f0f0f0;font-family:'Liberation Sans', sans-serif;font-weight:bold;">for each</div>
<div class="a" style="left:2117.75px;top:1078.75px;width:99.25px;height:21.25px;background:#232323;border:1px solid #434343;"></div>
<div class="a t" style="left:2122.00px;top:1084.53px;font-size:13.9px;line-height:13.9px;color:#d8d8d8;font-family:'Liberation Sans', sans-serif;">participants_3</div>
<svg class="a" style="left:2224.50px;top:1080.00px" width="20.00" height="19.00" viewBox="0 0 20 20" preserveAspectRatio="none"><rect x="0" y="0" width="20" height="20" rx="3.5" fill="#37363b"/><rect x="3.8" y="4.2" width="12.4" height="11" rx="1.6" fill="#d4d4d8"/><rect x="5.6" y="6.6" width="8.8" height="1.3" fill="#37363b"/><rect x="5.6" y="9.2" width="8.8" height="1.3" fill="#37363b"/><rect x="5.6" y="11.8" width="3.4" height="1.3" fill="#37363b"/></svg>
<div class="a" style="left:2547.00px;top:1048.00px;width:213.00px;height:127.00px;border:1.5px solid #66666b;border-radius:22px;"></div>
<svg class="a" style="left:1884.00px;top:1094.00px" width="32" height="34" viewBox="-2 -2 32 34"><path d="M1 1.2 H27 V5 L16.2 17.5 V27.8 L11.8 30 V17.5 L1 5 Z" fill="none" stroke="#f2f2f2" stroke-width="2.4" stroke-linejoin="round"/></svg>
<svg class="a" style="left:1905.00px;top:1109.00px" width="20.00" height="19.00" viewBox="0 0 20 20" preserveAspectRatio="none"><rect x="0" y="0" width="20" height="20" rx="3.5" fill="#343438"/><rect x="3.8" y="4.2" width="12.4" height="11" rx="1.6" fill="#cfcfd3"/><rect x="5.6" y="6.6" width="8.8" height="1.3" fill="#343438"/><rect x="5.6" y="9.2" width="8.8" height="1.3" fill="#343438"/><rect x="5.6" y="11.8" width="3.4" height="1.3" fill="#343438"/></svg>
<svg class="a" style="left:2134.50px;top:1109.00px" width="32" height="34" viewBox="-2 -2 32 34"><path d="M1 1.2 H27 V5 L16.2 17.5 V27.8 L11.8 30 V17.5 L1 5 Z" fill="none" stroke="#f2f2f2" stroke-width="2.4" stroke-linejoin="round"/></svg>
<svg class="a" style="left:2154.50px;top:1124.00px" width="20.00" height="19.00" viewBox="0 0 20 20" preserveAspectRatio="none"><rect x="0" y="0" width="20" height="20" rx="3.5" fill="#343438"/><rect x="3.8" y="4.2" width="12.4" height="11" rx="1.6" fill="#cfcfd3"/><rect x="5.6" y="6.6" width="8.8" height="1.3" fill="#343438"/><rect x="5.6" y="9.2" width="8.8" height="1.3" fill="#343438"/><rect x="5.6" y="11.8" width="3.4" height="1.3" fill="#343438"/></svg>
<svg class="a" style="left:2557.00px;top:1108.00px" width="32" height="34" viewBox="-2 -2 32 34"><path d="M1 1.2 H27 V5 L16.2 17.5 V27.8 L11.8 30 V17.5 L1 5 Z" fill="none" stroke="#f2f2f2" stroke-width="2.4" stroke-linejoin="round"/></svg>
<svg class="a" style="left:2577.50px;top:1123.50px" width="20.00" height="19.00" viewBox="0 0 20 20" preserveAspectRatio="none"><rect x="0" y="0" width="20" height="20" rx="3.5" fill="#343438"/><rect x="3.8" y="4.2" width="12.4" height="11" rx="1.6" fill="#cfcfd3"/><rect x="5.6" y="6.6" width="8.8" height="1.3" fill="#343438"/><rect x="5.6" y="9.2" width="8.8" height="1.3" fill="#343438"/><rect x="5.6" y="11.8" width="3.4" height="1.3" fill="#343438"/></svg>
<svg class="a" style="left:1692px;top:0px" width="1040" height="1326" viewBox="1692 0 1040 1326"><g fill="none" stroke="#9a9a9a" stroke-width="1.4"><path d="M2063 1000 C2050 1030 1920 1035 1692 1069"/><path d="M2063 1000 C2040 1050 1900 1050 1899.5 1090"/><path d="M2063 1000 C2075 1040 2150 1040 2150 1067.5"/><path d="M2063 1000 C2090 1020 2400 1018 2732 1031"/><path d="M1899.5 1132 C1905 1190 2150 1190 2159.5 1241"/><path d="M2150 1147.5 C2152 1190 2160 1200 2159.5 1241"/><path d="M2573 1146 C2575 1200 2631 1200 2631 1241.5"/><path d="M1692 1192.5 L1720 1211"/></g></svg>
<div class="a" style="left:1693px;top:1262.3px;width:205.4px;height:64px;border:2px solid #66666b;border-left:none;border-radius:0 0 28px 0"></div>
<div class="a" style="left:1693.00px;top:1267.00px;width:17.50px;height:25.60px;background:#44366b;border-right:1px solid #3a393e;"></div>
<div class="a" style="left:1693px;top:1267px;width:17px;height:25px;overflow:hidden"><div class="t" style="position:absolute;left:-8px;top:4.5px;font-size:13.3px;line-height:13.3px;color:#b69cff;font-family:Liberation Sans">Str</div></div>
<div class="a" style="left:1730.00px;top:1267.00px;width:71.00px;height:25.60px;background:#2c2b30;border:1px solid #3a393e;border-radius:1.5px;"></div>
<div class="a" style="left:1763.00px;top:1267.50px;width:37.50px;height:24.60px;background:#44366b;border-radius:3px;"></div>
<div class="a t" style="left:1737.50px;top:1272.82px;font-size:14.5px;line-height:14.5px;color:#d6d6d6;font-family:'Liberation Sans', sans-serif;"></div>
<div class="a t" style="left:782.00px;width:2000px;text-align:center;top:1273.10px;font-size:13.7px;line-height:13.7px;color:#b69cff;font-family:'Liberation Sans', sans-serif;">Date</div>
<div class="a" style="left:1808.00px;top:1267.00px;width:75.00px;height:25.60px;background:#2c2b30;border:1px solid #3a393e;border-radius:1.5px;"></div>
<div class="a" style="left:1848.00px;top:1267.50px;width:34.50px;height:24.60px;background:#44366b;border-radius:3px;"></div>
<div class="a t" style="left:1815.50px;top:1272.82px;font-size:14.5px;line-height:14.5px;color:#d6d6d6;font-family:'Liberation Sans', sans-serif;">note</div>
<div class="a t" style="left:865.50px;width:2000px;text-align:center;top:1273.10px;font-size:13.7px;line-height:13.7px;color:#b69cff;font-family:'Liberation Sans', sans-serif;">Str</div>
<div class="a t" style="left:746.50px;width:2000px;text-align:center;top:1299.38px;font-size:14.2px;line-height:14.2px;color:#f0f0f0;font-family:'Liberation Sans', sans-serif;font-weight:bold;">collector</div>
<div class="a" style="left:1951.50px;top:1245.50px;width:416.50px;height:154.50px;border:2px solid #66666b;"></div>
<div class="a" style="left:1966.50px;top:1250.00px;width:67.50px;height:26.00px;background:#2c2b30;border:1px solid #3a393e;border-radius:1.5px;"></div>
<div class="a" style="left:1989.50px;top:1250.50px;width:44.00px;height:25.00px;background:#44366b;border-radius:3px;"></div>
<div class="a t" style="left:1974.00px;top:1256.02px;font-size:14.5px;line-height:14.5px;color:#d6d6d6;font-family:'Liberation Sans', sans-serif;">id</div>
<div class="a t" style="left:1011.75px;width:2000px;text-align:center;top:1256.30px;font-size:13.7px;line-height:13.7px;color:#b69cff;font-family:'Liberation Sans', sans-serif;">Uuid</div>
<div class="a" style="left:2041.00px;top:1250.00px;width:101.50px;height:26.00px;background:#2c2b30;border:1px solid #3a393e;border-radius:1.5px;"></div>
<div class="a" style="left:2107.50px;top:1250.50px;width:34.50px;height:25.00px;background:#44366b;border-radius:3px;"></div>
<div class="a t" style="left:2048.50px;top:1256.02px;font-size:14.5px;line-height:14.5px;color:#d6d6d6;font-family:'Liberation Sans', sans-serif;">note_file</div>
<div class="a t" style="left:1125.00px;width:2000px;text-align:center;top:1256.30px;font-size:13.7px;line-height:13.7px;color:#b69cff;font-family:'Liberation Sans', sans-serif;">Str</div>
<div class="a" style="left:2149.00px;top:1250.00px;width:83.50px;height:26.00px;background:#2c2b30;border:1px solid #3a393e;border-radius:1.5px;"></div>
<div class="a" style="left:2188.00px;top:1250.50px;width:44.00px;height:25.00px;background:#44366b;border-radius:3px;"></div>
<div class="a t" style="left:2156.50px;top:1256.02px;font-size:14.5px;line-height:14.5px;color:#d6d6d6;font-family:'Liberation Sans', sans-serif;">time</div>
<div class="a t" style="left:1210.25px;width:2000px;text-align:center;top:1256.30px;font-size:13.7px;line-height:13.7px;color:#b69cff;font-family:'Liberation Sans', sans-serif;">Date</div>
<div class="a" style="left:2239.50px;top:1250.00px;width:90.00px;height:26.00px;background:#2c2b30;border:1px solid #3a393e;border-radius:1.5px;"></div>
<div class="a" style="left:2295.00px;top:1250.50px;width:34.00px;height:25.00px;background:#44366b;border-radius:3px;"></div>
<div class="a t" style="left:2247.00px;top:1256.02px;font-size:14.5px;line-height:14.5px;color:#d6d6d6;font-family:'Liberation Sans', sans-serif;">person</div>
<div class="a t" style="left:1312.25px;width:2000px;text-align:center;top:1256.30px;font-size:13.7px;line-height:13.7px;color:#b69cff;font-family:'Liberation Sans', sans-serif;">Str</div>
<div class="a" style="left:1966.50px;top:1283.00px;width:131.50px;height:25.00px;background:#2c2b30;border:1px solid #3a393e;border-radius:1.5px;"></div>
<div class="a" style="left:2055.00px;top:1283.50px;width:42.50px;height:24.00px;background:#44366b;border-radius:3px;"></div>
<div class="a t" style="left:1974.00px;top:1288.52px;font-size:14.5px;line-height:14.5px;color:#d6d6d6;font-family:'Liberation Sans', sans-serif;">is_organizer</div>
<div class="a t" style="left:1076.50px;width:2000px;text-align:center;top:1288.80px;font-size:13.7px;line-height:13.7px;color:#b69cff;font-family:'Liberation Sans', sans-serif;">Bool</div>
<div class="a t" style="left:1159.50px;width:2000px;text-align:center;top:1316.98px;font-size:14.2px;line-height:14.2px;color:#f0f0f0;font-family:'Liberation Sans', sans-serif;font-weight:bold;">collector</div>
<div class="a" style="left:2421.80px;top:1245.70px;width:338.20px;height:154.30px;border:2px solid #66666b;"></div>
<div class="a" style="left:2437.00px;top:1250.00px;width:67.80px;height:25.60px;background:#2c2b30;border:1px solid #3a393e;border-radius:1.5px;"></div>
<div class="a" style="left:2460.50px;top:1250.50px;width:43.80px;height:24.60px;background:#44366b;border-radius:3px;"></div>
<div class="a t" style="left:2444.50px;top:1255.82px;font-size:14.5px;line-height:14.5px;color:#d6d6d6;font-family:'Liberation Sans', sans-serif;">id</div>
<div class="a t" style="left:1482.65px;width:2000px;text-align:center;top:1256.10px;font-size:13.7px;line-height:13.7px;color:#b69cff;font-family:'Liberation Sans', sans-serif;">Uuid</div>
<div class="a" style="left:2511.70px;top:1250.00px;width:101.10px;height:25.60px;background:#2c2b30;border:1px solid #3a393e;border-radius:1.5px;"></div>
<div class="a" style="left:2578.00px;top:1250.50px;width:34.30px;height:24.60px;background:#44366b;border-radius:3px;"></div>
<div class="a t" style="left:2519.20px;top:1255.82px;font-size:14.5px;line-height:14.5px;color:#d6d6d6;font-family:'Liberation Sans', sans-serif;">note_file</div>
<div class="a t" style="left:1595.40px;width:2000px;text-align:center;top:1256.10px;font-size:13.7px;line-height:13.7px;color:#b69cff;font-family:'Liberation Sans', sans-serif;">Str</div>
<div class="a" style="left:2619.70px;top:1250.00px;width:83.30px;height:25.60px;background:#2c2b30;border:1px solid #3a393e;border-radius:1.5px;"></div>
<div class="a" style="left:2659.00px;top:1250.50px;width:43.50px;height:24.60px;background:#44366b;border-radius:3px;"></div>
<div class="a t" style="left:2627.20px;top:1255.82px;font-size:14.5px;line-height:14.5px;color:#d6d6d6;font-family:'Liberation Sans', sans-serif;">time</div>
<div class="a t" style="left:1681.00px;width:2000px;text-align:center;top:1256.10px;font-size:13.7px;line-height:13.7px;color:#b69cff;font-family:'Liberation Sans', sans-serif;">Date</div>
<div class="a" style="left:2437.00px;top:1283.00px;width:117.60px;height:25.80px;background:#2c2b30;border:1px solid #3a393e;border-radius:1.5px;"></div>
<div class="a" style="left:2520.00px;top:1283.50px;width:34.10px;height:24.80px;background:#44366b;border-radius:3px;"></div>
<div class="a t" style="left:2444.50px;top:1288.92px;font-size:14.5px;line-height:14.5px;color:#d6d6d6;font-family:'Liberation Sans', sans-serif;">description</div>
<div class="a t" style="left:1537.30px;width:2000px;text-align:center;top:1289.20px;font-size:13.7px;line-height:13.7px;color:#b69cff;font-family:'Liberation Sans', sans-serif;">Str</div>
<div class="a" style="left:2654.00px;top:1310.70px;width:55.60px;height:29.30px;background:#44366b;border-radius:4px;"></div>
<div class="a t" style="left:2601.00px;top:1314.48px;font-size:14.2px;line-height:14.2px;color:#f0f0f0;font-family:'Liberation Sans', sans-serif;font-weight:bold;">collector</div>
<div class="a" style="left:1718.00px;top:1196.80px;width:45.00px;height:129.20px;background:#fefefe;"></div>
<div class="a" style="left:1718.00px;top:1241.20px;width:45.00px;height:1.00px;background:#e4e4e4;"></div>
<div class="a" style="left:1718.00px;top:1288.00px;width:45.00px;height:1.00px;background:#e4e4e4;"></div>
<svg class="a" style="left:1718px;top:1196.8px" width="45" height="130" viewBox="0 0 45 130"><path d="M22.5 11.5 V32.5 M12 22.2 H33" stroke="#111" stroke-width="3"/><path d="M12 69 H33" stroke="#999" stroke-width="3"/><path d="M13.5 112.5 V108.5 Q13.5 106.5 15.5 106.5 H19 M26 106.5 H29.5 Q31.5 106.5 31.5 108.5 V112.5 M31.5 119 V123 Q31.5 125 29.5 125 H26 M19 125 H15.5 Q13.5 125 13.5 123 V119" fill="none" stroke="#111" stroke-width="3"/></svg>
<svg class="a" style="left:2270px;top:80px" width="250" height="104" viewBox="2270 80 250 104"><defs><linearGradient id="hg" x1="0" y1="0" x2="1" y2="0"><stop offset="0" stop-color="#fdf3b0"/><stop offset="0.5" stop-color="#fde0cf"/><stop offset="1" stop-color="#ffb2f6"/></linearGradient></defs><rect x="2283.3" y="91.8" width="224.4" height="79.9" rx="40" fill="none" stroke="url(#hg)" stroke-width="8.6"/></svg>
<svg class="a" style="left:2100px;top:90px" width="190" height="190" viewBox="2100 90 190 190"><g fill="none" stroke="#00bf63" stroke-width="9.6" stroke-linecap="round" stroke-linejoin="round"><circle cx="2259" cy="127.2" r="14.7"/><path d="M2246 122.8 C2190 114 2127 112 2127 157.7 C2127 185 2150 217 2174.8 255.6"/><path d="M2174.8 230.4 V255.6 L2151 248.4"/></g></svg>
<svg class="a" style="left:1180px;top:290px" width="240" height="600" viewBox="1180 290 240 600"><g fill="none" stroke="#9155fb" stroke-width="10" stroke-linecap="round" stroke-linejoin="round"><circle cx="1392.8" cy="327.3" r="14.4"/><path d="M1378.4 327.2 H1263 Q1216.9 327.2 1216.9 373.2 V875"/><path d="M1202 855.2 L1216.8 875.6 L1231.6 855.2"/></g></svg>
<div class="a" style="left:682.50px;top:73.00px;width:181.50px;height:64.00px;background:#00c064;border-radius:16px;"></div>
<div class="a t" style="left:-220.50px;width:2000px;text-align:center;top:87.04px;font-size:33.5px;line-height:33.5px;color:#ffffff;font-family:'Liberation Sans', sans-serif;font-weight:bold;letter-spacing:1.55px;">Output</div>
<div class="a" style="left:1057.00px;top:635.50px;width:355.00px;height:82.50px;background:#5b16e6;border-radius:7px;"></div>
<div class="a t" style="left:234.50px;width:2000px;text-align:center;top:664.93px;font-size:32.2px;line-height:32.2px;color:#ffffff;font-family:'Liberation Mono', monospace;font-weight:bold;transform:scaleY(1.14);transform-origin:0 24.7px;">View content</div>
</body></html>
